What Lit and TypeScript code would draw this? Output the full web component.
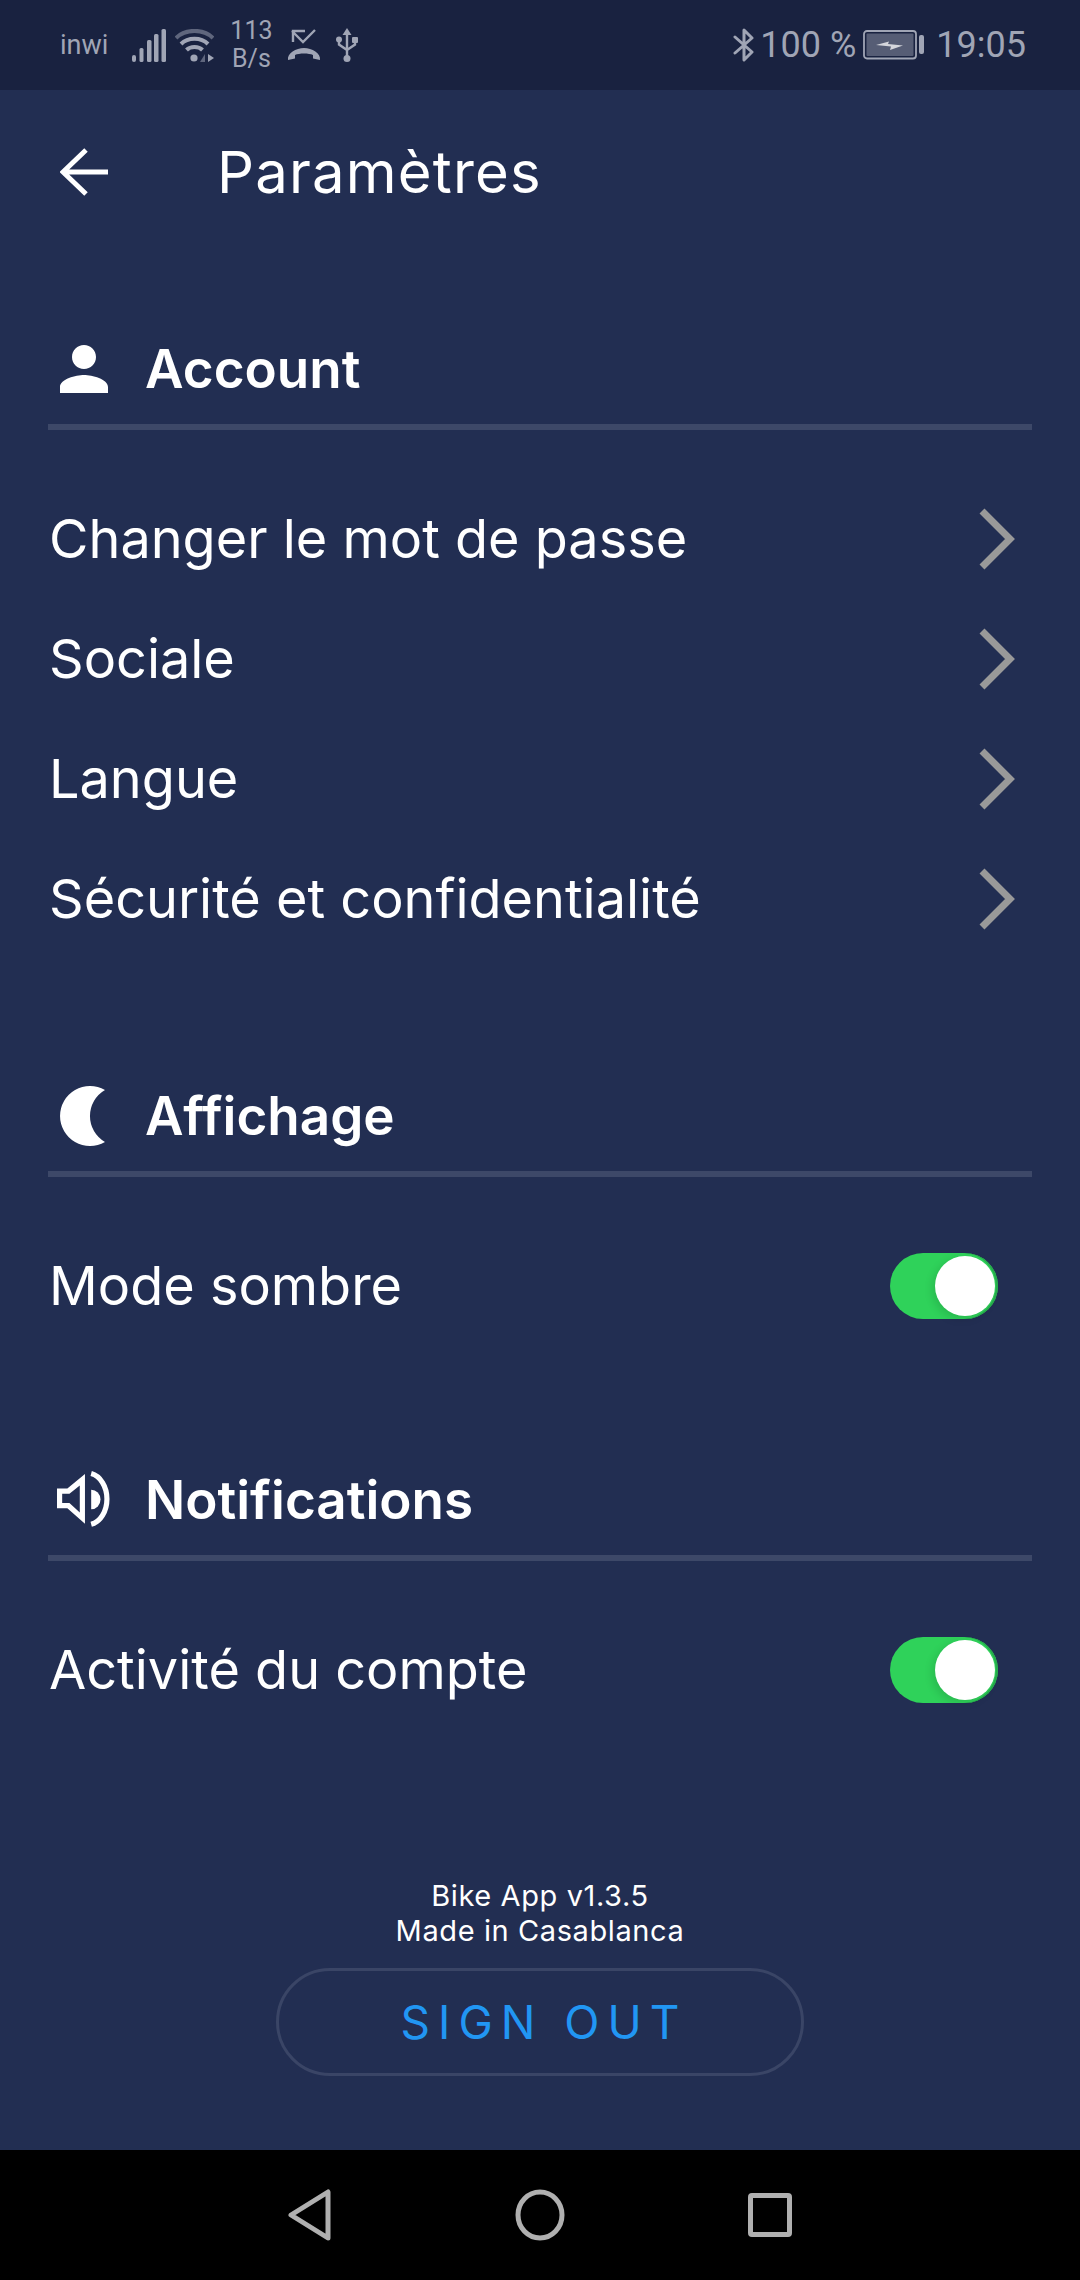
import { LitElement, html, css, svg } from "lit";
import { customElement } from "lit/decorators.js";

const ICON = "#a0a5b5";

const personIcon = svg`<svg width="48" height="48" viewBox="4 4 16 16"><path fill="#fff" d="M12 12c2.21 0 4-1.79 4-4s-1.79-4-4-4-4 1.79-4 4 1.79 4 4 4zm0 2c-2.67 0-8 1.34-8 4v2h16v-2c0-2.66-5.33-4-8-4z"/></svg>`;
const moonIcon = svg`<svg width="48" height="60" viewBox="0 0 48 60"><path fill="#fff" d="M45 4A30 30 0 1 0 45 56A30 30 0 0 1 45 4Z"/></svg>`;
const speakerIcon = svg`<svg class="speaker" width="58" height="58" viewBox="0 0 56 56"><path fill="#fff" fill-rule="evenodd" d="M0 17H10L27 3V51L10 36H0ZM5 22V31H12L22 40V14L12 22Z"/><path fill="#fff" d="M33 18A9 9.5 0 0 1 33 37Z"/><path fill="none" stroke="#fff" stroke-width="5" d="M33 2.5A19 25 0 0 1 33 51.5"/></svg>`;
const backIcon = svg`<svg width="50" height="50" viewBox="0 0 50 50"><path fill="none" stroke="#fff" stroke-width="5" d="M2 25H48M26 3L3 25L26 47"/></svg>`;
const chevron = svg`<svg width="36" height="62" viewBox="0 0 36 62"><path fill="none" stroke="#999" stroke-width="7" d="M3 3L31 31L3 59"/></svg>`;

const signalIcon = svg`<svg width="34" height="33" viewBox="0 0 34 33"><g fill="${ICON}"><rect x="0" y="26" width="4" height="7" rx="2"/><rect x="7.5" y="19" width="4" height="14" rx="1.5"/><rect x="15" y="11" width="4.5" height="22" rx="1.5"/><rect x="22" y="5" width="4.5" height="28" rx="1.5"/><rect x="29.5" y="0" width="4.5" height="33" rx="1.5"/></g></svg>`;
const wifiIcon = svg`<svg width="39" height="33" viewBox="0 0 39 33"><g fill="none" stroke-width="4"><path stroke="#5f667d" d="M1 9C10 -0.5 29 -0.5 38 9"/><path stroke="${ICON}" d="M6 15C13 8 26 8 33 15"/><path stroke="${ICON}" d="M11.5 21C15.5 17 23.5 17 27.5 21"/></g><circle cx="19" cy="29" r="3.6" fill="${ICON}"/><path fill="#5f667d" d="M30 25V33H25Z"/><path fill="${ICON}" d="M33 25L39 29L33 33Z"/></svg>`;
const missedIcon = svg`<svg width="34" height="32" viewBox="0 0 34 32"><path fill="none" stroke="${ICON}" stroke-width="2.4" d="M6 13V2H18M5 2L16 13L28 1"/><path fill="${ICON}" d="M1 31C0 24 9 19 17 19C25 19 34 24 33 31L26 29.5V26C22 24 12 24 8 26V29.5Z"/></svg>`;
const usbIcon = svg`<svg width="22" height="34" viewBox="0 0 22 34"><g fill="${ICON}"><path d="M11 0L15.5 7H6.5Z"/><circle cx="11" cy="30.500" r="3.500"/><circle cx="3" cy="11.500" r="3"/><rect x="16" y="9" width="6" height="6" rx="1"/></g><path fill="none" stroke="${ICON}" stroke-width="2.400" d="M11 5V29M3 13V16.500L11 22M19 14V16.500L11 22"/></svg>`;
const btIcon = svg`<svg width="22" height="36" viewBox="0 0 22 36"><path fill="none" stroke="${ICON}" stroke-width="3" stroke-linecap="round" stroke-linejoin="round" d="M2 10L19 25L11 33V3L19 11L2 26"/></svg>`;
const batteryIcon = svg`<svg width="61" height="30" viewBox="0 0 61 30"><rect x="1" y="1" width="52" height="27.500" rx="3" fill="none" stroke="${ICON}" stroke-width="1.800"/><rect x="3.500" y="3.500" width="47" height="22.500" rx="1" fill="#565d75"/><rect x="56" y="5" width="5" height="19" rx="2" fill="${ICON}"/><path fill="#d4d6dc" d="M13 15L26 11.500L25 14L40 15.500L27 20L28 16.500Z"/></svg>`;

const navBack = svg`<svg width="44" height="52" viewBox="0 0 44 52"><path fill="none" stroke="#b0b0b0" stroke-width="5" stroke-linejoin="round" d="M3 26L40 3V49Z"/></svg>`;
const navHome = svg`<svg width="50" height="52" viewBox="0 0 50 52"><ellipse cx="25" cy="26" rx="22" ry="23" fill="none" stroke="#b0b0b0" stroke-width="5"/></svg>`;
const navRecent = svg`<svg width="44" height="44" viewBox="0 0 44 44"><rect x="2.500" y="2.500" width="39" height="39" rx="1.500" fill="none" stroke="#b0b0b0" stroke-width="5"/></svg>`;

@customElement("app-root")
export class AppRoot extends LitElement {
  static styles = css`
    :host {
      display: flex;
      flex-direction: column;
      width: 1080px;
      height: 2280px;
      background: #222e52;
      color: #fff;
      font-family: "Inter", "Noto Sans", sans-serif;
    }

    svg {
      display: block;
      flex: none;
    }

    .status {
      display: flex;
      justify-content: space-between;
      align-items: center;
      height: 90px;
      padding: 0 54px 0 60px;
      box-sizing: border-box;
      background: #192240;
      color: #a0a5b5;
      font-family: "Roboto", sans-serif;
    }

    .status-left,
    .status-right {
      display: flex;
      align-items: center;
    }

    .carrier {
      font-size: 27px;
      margin-right: 24px;
    }

    .wifi {
      margin-left: 9px;
    }

    .speed {
      margin: 0 14px 0 16px;
      font-size: 25px;
      line-height: 28px;
      text-align: center;
    }

    .usb {
      margin-left: 15px;
    }

    .status-right {
      font-size: 36px;
    }

    .bt {
      margin-right: 5px;
    }

    .battery {
      margin: 0 12px 0 7px;
    }

    .appbar {
      display: flex;
      align-items: center;
      height: 164px;
      padding: 0 0 2px 60px;
      box-sizing: content-box;
      gap: 107px;
    }

    .appbar h1 {
      margin: 0;
      font-size: 58px;
      font-weight: 400;
      letter-spacing: 1.2px;
    }

    .section-head {
      display: flex;
      align-items: center;
      height: 110px;
      margin: 0 48px;
      border-bottom: 6px solid #3d4868;
    }

    .section-head h2 {
      margin: 0;
      font-size: 53px;
      font-weight: 600;
    }

    .head-icon {
      width: 97px;
      padding-left: 12px;
      box-sizing: border-box;
    }

    .speaker {
      margin-left: -3px;
    }

    .account {
      margin-top: 58px;
    }

    .display {
      margin-top: 102px;
    }

    .notifs {
      margin-top: 99px;
    }

    .rows {
      margin-top: 49px;
    }

    .row {
      display: flex;
      justify-content: space-between;
      align-items: center;
      height: 120px;
      padding: 0 65px 0 49px;
      font-size: 54px;
    }

    .row span {
      margin-bottom: 1px;
    }

    .toggle-row {
      padding-right: 82px;
    }

    .toggle {
      display: flex;
      justify-content: flex-end;
      align-items: center;
      width: 108px;
      height: 66px;
      padding-right: 3px;
      box-sizing: border-box;
      border-radius: 33px;
      background: #2fd25a;
      box-shadow: inset -2px 0 0 #27ad4c;
    }

    .knob {
      width: 60px;
      height: 60px;
      border-radius: 50%;
      background: #fff;
      box-shadow: -3px 3px 8px rgba(0, 0, 0, 0.12);
    }

    .footer {
      display: flex;
      flex-direction: column;
      align-items: center;
      flex: 1;
      padding-top: 148px;
    }

    .credits {
      font-size: 29px;
      line-height: 35px;
      letter-spacing: 0.6px;
      text-align: center;
    }

    .signout {
      display: flex;
      justify-content: center;
      align-items: center;
      width: 528px;
      height: 108px;
      margin-top: 20px;
      padding-left: 14px;
      box-sizing: border-box;
      border: 3px solid #3a4566;
      border-radius: 54px;
      background: none;
      color: #2196f3;
      font-family: inherit;
      font-size: 46px;
      letter-spacing: 8px;
    }

    .navbar {
      display: flex;
      align-items: center;
      justify-content: center;
      gap: 183px;
      height: 130px;
      background: #000;
    }
  `;

  sectionHead(icon: unknown, title: string, cls: string) {
    return html`
      <div class="section-head ${cls}">
        <div class="head-icon">${icon}</div>
        <h2>${title}</h2>
      </div>
    `;
  }

  toggleRow(label: string) {
    return html`
      <div class="rows">
        <div class="row toggle-row">
          <span>${label}</span>
          <div class="toggle"><div class="knob"></div></div>
        </div>
      </div>
    `;
  }

  render() {
    const accountRows = [
      "Changer le mot de passe",
      "Sociale",
      "Langue",
      "Sécurité et confidentialité",
    ];

    return html`
      <div class="status">
        <div class="status-left">
          <span class="carrier">inwi</span>
          ${signalIcon}
          <span class="wifi">${wifiIcon}</span>
          <div class="speed">113<br />B/s</div>
          ${missedIcon}
          <span class="usb">${usbIcon}</span>
        </div>
        <div class="status-right">
          <span class="bt">${btIcon}</span>
          <span>100 %</span>
          <span class="battery">${batteryIcon}</span>
          <span>19:05</span>
        </div>
      </div>

      <div class="appbar">
        ${backIcon}
        <h1>Paramètres</h1>
      </div>

      ${this.sectionHead(personIcon, "Account", "account")}
      <div class="rows">
        ${accountRows.map(
          (r) => html`<div class="row"><span>${r}</span>${chevron}</div>`
        )}
      </div>

      ${this.sectionHead(moonIcon, "Affichage", "display")}
      ${this.toggleRow("Mode sombre")}

      ${this.sectionHead(speakerIcon, "Notifications", "notifs")}
      ${this.toggleRow("Activité du compte")}

      <div class="footer">
        <div class="credits">Bike App v1.3.5<br />Made in Casablanca</div>
        <button class="signout">SIGN OUT</button>
      </div>

      <div class="navbar">
        ${navBack}${navHome}${navRecent}
      </div>
    `;
  }
}
